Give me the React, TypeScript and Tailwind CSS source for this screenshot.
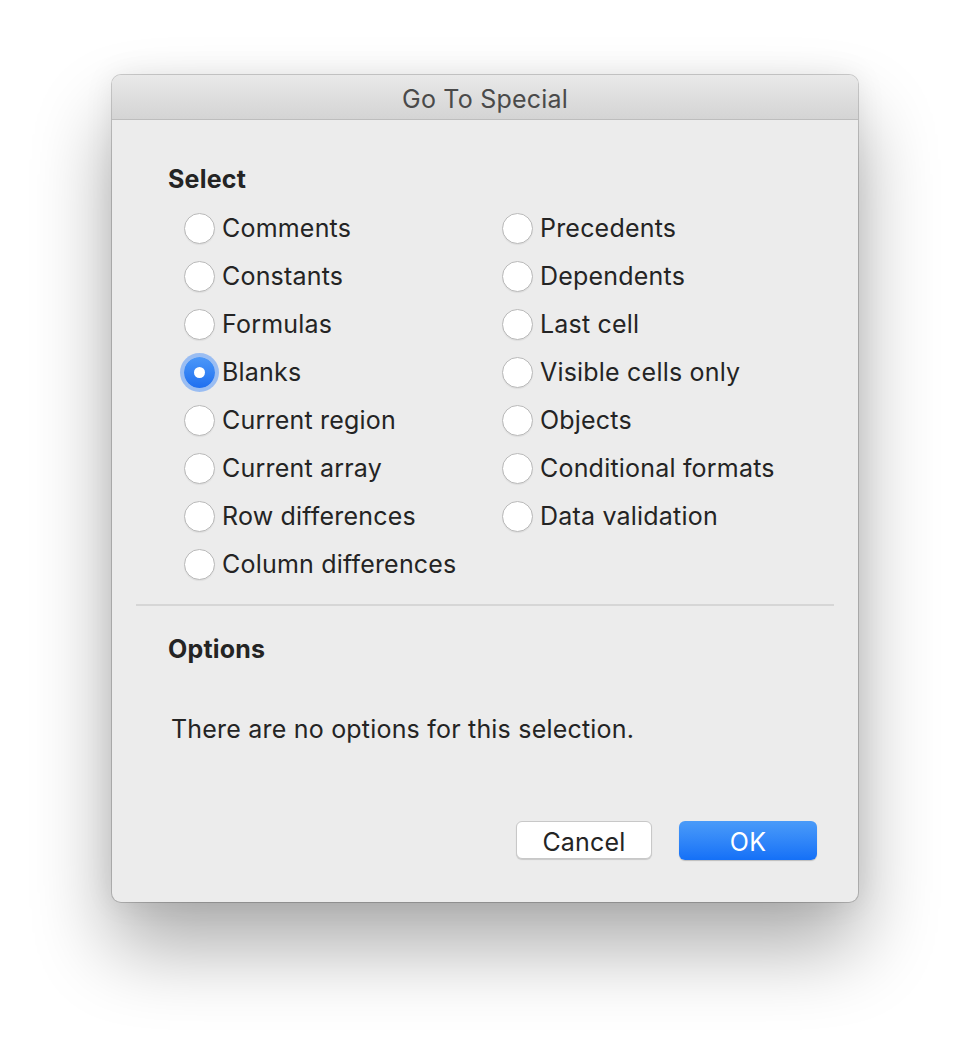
import React from "react";

const left = ["Comments", "Constants", "Formulas", "Blanks", "Current region", "Current array", "Row differences", "Column differences"];
const right = ["Precedents", "Dependents", "Last cell", "Visible cells only", "Objects", "Conditional formats", "Data validation"];

function Radio({ label, checked }: { label: string; checked?: boolean }) {
  return (
    <div className="flex h-[48px] items-center">
      {checked ? (
        <div className="flex h-[31px] w-[31px] items-center justify-center rounded-full bg-gradient-to-b from-[#4b97f8] to-[#1f6ff0] shadow-[0_0_0_4px_rgba(100,158,246,0.6)]">
          <div className="h-[11px] w-[11px] rounded-full bg-white" />
        </div>
      ) : (
        <div className="h-[31px] w-[31px] rounded-full border border-[#b9b9b9] bg-white shadow-[0_1px_1px_rgba(0,0,0,0.06)]" />
      )}
      <span className="ml-[7px] text-[25px] leading-[30px] tracking-[0.2px] text-[#242424]">{label}</span>
    </div>
  );
}

export default function App() {
  return (
    <div className="flex min-h-[1050px] w-full justify-center bg-white pt-[75px]" style={{ fontFamily: "Inter, 'Noto Sans', sans-serif" }}>
      <div className="flex h-[827px] w-[746px] flex-col overflow-hidden rounded-[9px] bg-[#ececec] shadow-[0_45px_80px_rgba(0,0,0,0.33),0_0_30px_rgba(0,0,0,0.08),0_0_0_1px_rgba(0,0,0,0.18)]">
        <div className="flex h-[45px] shrink-0 items-center justify-center border-b border-[#bdbdbd] bg-gradient-to-b from-[#e9e9e9] to-[#d4d4d4] pt-[4px]">
          <span className="text-[25px] leading-[30px] tracking-[0.2px] text-[#4a4a4a]">Go To Special</span>
        </div>
        <div className="flex flex-1 flex-col">
          <div className="pl-[56px] pt-[44px] text-[25px] font-bold leading-[30px] tracking-[0.2px] text-[#242424]">Select</div>
          <div className="mt-[10px] flex pl-[72px]">
            <div className="flex w-[318px] flex-col">
              {left.map((l) => (
                <Radio key={l} label={l} checked={l === "Blanks"} />
              ))}
            </div>
            <div className="flex flex-col">
              {right.map((l) => (
                <Radio key={l} label={l} />
              ))}
            </div>
          </div>
          <div className="mx-[24px] mt-[16px] h-[2px] bg-[#d6d6d6]" />
          <div className="pl-[56px] pt-[28px] text-[25px] font-bold leading-[30px] tracking-[0.2px] text-[#242424]">Options</div>
          <div className="pl-[59px] pt-[50px] text-[25px] leading-[30px] tracking-[0.2px] text-[#242424]">There are no options for this selection.</div>
          <div className="mt-auto flex justify-end gap-[27px] pb-[42px] pr-[41px]">
            <button className="h-[38px] w-[136px] rounded-[6px] border border-[#c8c8c8] bg-white pt-[3px] text-[25px] leading-[30px] tracking-[0.2px] text-[#242424] shadow-[0_1px_1px_rgba(0,0,0,0.15)]">Cancel</button>
            <button className="h-[39px] w-[138px] rounded-[6px] bg-gradient-to-b from-[#4a9bf9] to-[#1470f7] pt-[3px] text-[25px] leading-[30px] tracking-[0.2px] text-white shadow-[0_1px_1px_rgba(0,0,0,0.2)]">OK</button>
          </div>
        </div>
      </div>
    </div>
  );
}
